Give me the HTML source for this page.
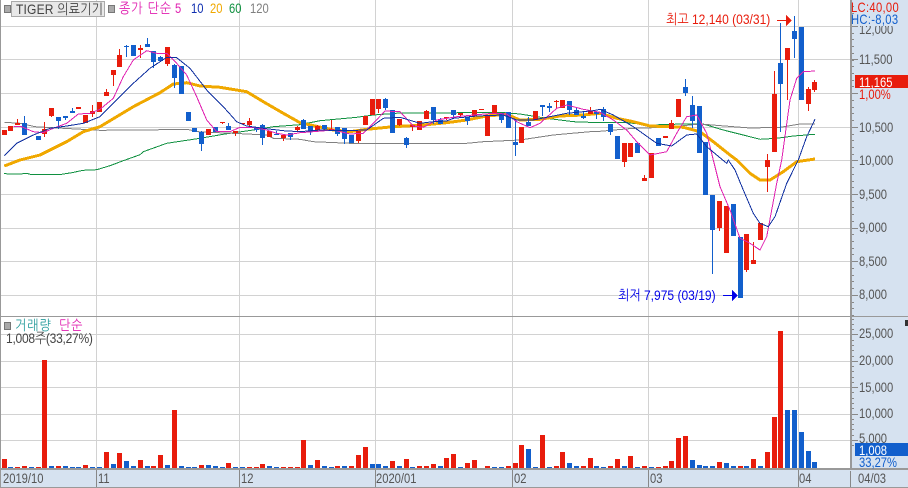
<!DOCTYPE html>
<html><head><meta charset="utf-8">
<style>
html,body{margin:0;padding:0;background:#fff}
#w{position:relative;width:908px;height:488px;overflow:hidden;background:#fff;font-family:"Liberation Sans","NanumGothic","Noto Sans CJK KR",sans-serif;font-size:14px}
svg{position:absolute;left:0;top:0}
.t{position:absolute;white-space:nowrap;line-height:14px;height:14px;color:#555;transform:scaleX(.8);transform-origin:0 50%}
.a{left:859px}
.k{transform:scaleX(.86)}
.s{position:absolute;width:5px;height:6px;background:#aaa;border:1px solid #777}
</style></head><body>
<div id="w">
<svg id="c" width="908" height="488" viewBox="0 0 908 488" shape-rendering="crispEdges"></svg>
<div class="s" style="left:4px;top:5px"></div>
<div style="position:absolute;left:11px;top:1px;width:92px;height:14px;background:#e8e8e8;border:1px solid #aaa"></div>
<div class="t k" style="left:16px;top:2px;color:#444;letter-spacing:.2px">TIGER 의료기기</div>
<div class="s" style="left:108px;top:5px"></div>
<div class="t k" style="left:119px;top:1px;color:#e020b0;letter-spacing:1px">종가 단순</div>
<div class="t" style="left:175px;top:1px;color:#e020b0">5</div>
<div class="t" style="left:191px;top:1px;color:#1030b0">10</div>
<div class="t" style="left:210px;top:1px;color:#f0a800">20</div>
<div class="t" style="left:229px;top:1px;color:#109040">60</div>
<div class="t" style="left:250px;top:1px;color:#808080">120</div>

<div class="t" style="left:851px;top:0;color:#e81c0c;letter-spacing:.4px">LC:40,00</div>
<div class="t" style="left:851px;top:12px;color:#125fcc;letter-spacing:.4px">HC:-8,03</div>

<div class="t a" style="top:22px;clip-path:inset(4px 0 0 0)">12,000</div>
<div class="t a" style="top:52px">11,500</div>
<div class="t a" style="top:120px">10,500</div>
<div class="t a" style="top:153px">10,000</div>
<div class="t a" style="top:187px">9,500</div>
<div class="t a" style="top:220px">9,000</div>
<div class="t a" style="top:254px">8,500</div>
<div class="t a" style="top:287px">8,000</div>
<div class="t a" style="top:87px;color:#e81c0c">1,00%</div>
<div style="position:absolute;left:855px;top:75px;width:53px;height:13px;background:#e81c0c"></div>
<div class="t a" style="top:75px;color:#fff">11,165</div>

<div class="t k" style="left:666px;top:12px;color:#e81c0c">최고 12,140 (03/31)</div>
<div class="t k" style="left:618px;top:288px;color:#0000e8">최저 7,975 (03/19)</div>

<div class="s" style="left:4px;top:322px"></div>
<div class="t k" style="left:15px;top:318px;color:#2a9d9d;letter-spacing:1px">거래량</div>
<div class="t k" style="left:59px;top:318px;color:#e020b0;letter-spacing:1px">단순</div>
<div class="t k" style="left:6px;top:331px;color:#444;letter-spacing:-.3px">1,008주(33,27%)</div>

<div class="t a" style="top:326px">25,000</div>
<div class="t a" style="top:353px">20,000</div>
<div class="t a" style="top:380px">15,000</div>
<div class="t a" style="top:406px">10,000</div>
<div class="t a" style="top:431px">5,000</div>
<div style="position:absolute;left:855px;top:443px;width:53px;height:13px;background:#125fcc"></div>
<div class="t a" style="top:443px;color:#fff">1,008</div>
<div class="t a" style="top:455px;color:#125fcc">33,27%</div>
<div style="position:absolute;left:905px;top:320px;width:3px;height:6px;background:#333"></div>

<div class="t" style="left:3px;top:471px">2019/10</div>
<div class="t" style="left:98px;top:471px">11</div>
<div class="t" style="left:241px;top:471px">12</div>
<div class="t" style="left:376px;top:471px">2020/01</div>
<div class="t" style="left:514px;top:471px">02</div>
<div class="t" style="left:650px;top:471px">03</div>
<div class="t" style="left:799px;top:471px">04</div>
<div class="t" style="left:858px;top:471px">04/03</div>
</div>
<script>
(function(){
var R='#e81c0c',B='#125fcc',out=[];
function rect(x,y,w,h,f){out.push('<rect x="'+x+'" y="'+y+'" width="'+w+'" height="'+h+'" fill="'+f+'"/>');}
// panels
rect(851,0,57,488,'#d6e2f0');
rect(0,469,908,19,'#d6e2f0');
// grid
[26,59,93,127,160,194,228,261,295,334,361,387,414,440].forEach(function(y){rect(1,y,849,1,'#d2d2d2');});
[96,239,375,512,648,798].forEach(function(x){rect(x,0,1,469,'#d2d2d2');});
// ticks
for(var k=0;k<47;k++){var y=Math.round(26+(k-3)*6.72);if(y>=0&&y<316){rect(851,y,3,1,'#888');}}
[26,59,93,127,160,194,228,261,295].forEach(function(y){rect(851,y,7,1,'#888');});
for(var k=0;k<29;k++){var y=Math.round(440+5.28-k*5.28*1);if(y>317&&y<468){rect(851,y,3,1,'#888');}}
[334,361,387,414,440].forEach(function(y){rect(851,y,7,1,'#888');});
// frame
rect(0,0,1,488,'#999');
rect(850,0,2,469,'#999');
rect(0,316,908,1,'#999');
rect(0,468,908,2,'#999');
rect(0,487,908,1,'#999');
[96,239,375,512,648,798].forEach(function(x){rect(x,470,1,17,'#888');});
rect(850,471,1,16,'#888');
// MAs
function seq(a){var s=[];a.forEach(function(g){var ox=g[0],oy=g[1],p=g[2];for(var i=0;i<p.length;i+=2){s.push((ox+p[i]/3).toFixed(1)+','+(oy+p[i+1]/3).toFixed(1));}});return s.join(' ');}
function pl(a,c,w){out.push('<polyline fill="none" stroke="'+c+'" stroke-width="'+w+'" points="'+seq(a)+'"/>');}
pl([[0,150,[12,70,24,72,60,72,80,70,90,73,185,73,215,68,250,61,290,59,330,47,370,32,420,14]],[0,0,[430,455,500,430,600,415,670,403,760,390,820,380,900,374]],[300,80,[60,122,170,112,220,105,300,99,400,99,600,97,660,102,740,115,820,125,900,128]],[600,0,[70,367,150,375,250,372,310,372,370,390,430,405,480,418,530,415,580,408,645,403]]],'#109040',1);
pl([[0,0,[13,367,60,370,105,380,190,385,300,391,430,390,560,388,600,396,700,400,800,405,820,415,900,418]],[300,80,[40,185,150,190,500,190,550,185,660,180,760,165,870,155,900,154]],[600,0,[100,385,200,382,300,372,400,380,450,384,540,382,600,372,645,372]]],'#808080',1);
var orange=[[0,0,[13,498,60,480,120,465,200,425,250,395,300,380,400,320,480,278,520,252,560,248,600,258,660,262,740,275,790,305,850,340,900,368]],[300,80,[100,150,150,155,200,148,280,140,370,135,440,128,500,120,560,108,620,103,660,120,720,118,780,108,850,105,900,100]],[600,0,[50,355,100,365,150,378,250,382,300,395,340,425,390,465]],[600,160,[410,0,450,40,480,60,510,60,550,35,590,5,645,-3]]];
pl(orange,'#f0a800',3);
// candles
var C=[[R,390,390,404,404],[R,379,379,392,392],[R,358,370,374,376],[B,348,370,404,405],null,[B,408,408,420,420],[R,366,388,402,411],[R,324,324,348,350],[B,351,351,362,388],[B,348,348,354,360],[B,324,333,338,338],[R,321,321,326,326],[R,345,345,368,368],[R,315,333,341,351],[R,306,306,336,336],[R,267,276,288,288],[R,210,210,225,258],[R,147,165,200,200],[B,135,137,141,171],[B,135,135,168,168],[R,135,144,150,174],[B,114,132,141,141],[B,153,153,186,204],[B,168,171,183,183],[R,141,141,192,198],[B,192,195,234,264],[B,198,198,282,282],[B,336,336,363,363],[B,384,384,396,396],[B,393,396,432,453],[R,387,387,405,405],[B,381,381,396,396],[R,366,366,369,372],[B,369,378,390,390],[R,393,393,399,408],[R,369,369,372,372],[R,354,363,375,384],[B,381,381,390,396],[B,372,375,414,435],[R,393,393,411,411],[B,393,402,405,405],[R,404,404,414,423],[B,399,399,411,420],[R,378,381,390,393]];
var D=[[B,117,120,147,147],[B,138,138,157,165],[R,135,138,150,153],[B,135,135,147,150],[R,120,147,150,153],[B,141,141,162,168],[B,144,144,177,192],[B,165,165,190,190],[R,153,153,183,190],[R,108,108,135,135],[R,57,57,105,105],[R,57,57,87,99],[B,54,57,84,90],[B,90,90,159,159],[R,117,117,135,138],[B,171,174,195,204],[R,135,135,141,153],[R,123,123,150,150],[R,90,93,117,117],[B,81,81,120,132],[B,114,120,132,132],[R,111,111,115,120],[B,90,90,105,111],[R,99,99,104,108],[B,111,111,123,135],[R,90,90,108,111],[R,87,87,90,90],[R,105,105,168,168],[R,75,75,99,99],[B,99,99,120,129],[B,96,96,144,144],[B,117,186,195,228],[R,141,141,189,189],[B,111,126,138,138],[R,93,93,120,120],[B,75,75,81,108],[B,69,78,84,96],[R,60,63,67,84],[R,60,60,84,84],[B,63,63,90,105],[B,81,90,105,105],[B,96,108,114,117],[R,81,93,102,102],[B,96,96,102,117]];
var E=[[B,321,327,351,363],[B,372,372,396,405],[B,408,408,477,477],[R,429,429,486,501],[R,429,429,471,471],[B,429,429,459,459],[R,525,534,543,543],[R,459,459,534,534],[B,414,414,438,438],[R,408,408,414,414],[R,361,369,387,387],[R,297,297,351,351],[B,237,261,279,288],[B,288,315,363,384],[B,318,318,459,459],[B,426,426,585,585],[B,585,585,690,822],[R,603,603,684,693],[R,618,618,759,759],[B,612,612,708,708],[B,711,711,894,894],[R,702,702,810,816],[R,726,780,792,792],[R,669,669,720,720],[R,462,480,501,576],[R,213,282,456,456],[B,69,189,252,396],[R,144,144,180,300],[B,48,93,117,174],[B,81,81,300,300],[R,261,267,312,333],[R,240,246,270,276]];
function draw(d,oy,start){for(var n=0;n<d.length;n++){var c=d[n];if(!c)continue;var i=start+n,col=Math.floor(4+i*6.815);
var f=function(v){return Math.round(oy+v/3);};var wt=f(c[1]),bt=f(c[2]),bb=f(c[3]),wb=f(c[4]);
rect(col,wt,1,Math.max(wb-wt,1),c[0]);rect(col-2,bt,5,Math.max(bb-bt,1),c[0]);}}
draw(C,0,0);draw(D,80,44);draw(E,0,88);
// remaining MAs on top
pl([[0,0,[40,380,65,380,100,395,130,398,160,385,200,370,235,342,270,340,300,328,340,295,370,230,400,180,440,152,470,160,500,160,530,190,560,225,590,290,620,360,650,395,690,395,720,382,760,382,800,390,830,400,860,405,900,398]],[300,80,[40,155,100,150,150,162,190,160,220,130,255,93,300,95,340,138,370,142,410,120,470,110,520,105,580,100,620,102,650,125,690,143,720,130,770,85,800,75,850,88,900,97]],[600,0,[40,360,80,390,110,425,150,465,200,455,230,400,260,350,290,345,320,400]],[600,160,[340,0,360,80,390,150,420,235,450,250,480,270,500,230,530,70,545,0]],[600,0,[570,300,590,235,610,215,645,213]]],'#e020b0',1);
pl([[0,0,[13,467,50,430,100,405,150,385,200,378,250,370,300,350,350,300,400,250,450,205,500,172,530,173,570,205,620,270,670,320,710,365,740,378,790,385,850,392,900,395]],[300,80,[60,150,130,152,200,150,250,115,300,112,360,130,400,125,440,123,460,115,530,108,610,105,650,120,700,120,740,112,800,100,880,92,900,88]],[600,0,[40,345,100,380,170,430,215,438,260,405,290,402,320,440,380,490]],[600,160,[385,0,405,30,430,90,460,160,480,190,505,200,525,170,560,70,595,0]],[600,0,[620,410,645,358]]],'#1030a0',1);
// volume
var V=[[R,447],[B,471],[R,471],[R,468],[B,471],[R,471],[R,150],[B,468],[R,468],[B,468],[B,471],[B,471],[R,465],[B,471],[B,471],[R,426],[B,462],[R,429],[B,453],[B,468],[R,450],[B,468],[R,468],[R,435],[B,465],[R,300],[B,468],[B,471],[B,471],[R,465],[B,465],[B,468],[B,471],[R,459],[B,471],[B,471],[R,471],[R,471],[R,462],[B,468],[B,471],[R,471],[R,471],[R,471]];
var W=[[R,120],[B,195],[R,180],[B,198],[B,201],[R,198],[B,198],[R,198],[R,165],[R,141],[B,192],[B,192],[B,198],[R,183],[B,198],[R,177],[B,201],[R,198],[R,198],[R,192],[B,198],[R,174],[R,162],[B,201],[R,189],[R,180],null,[R,198],[B,201],[B,201],[R,198],[R,189],[R,135],[B,147],[B,201],[R,105],[B,201],[R,198],[R,156],[B,189],[B,198],[R,198],[R,174],[B,198]];
var X=[[B,441],[R,438],[R,417],[B,438],[R,408],[B,441],[R,438],[B,441],[R,441],[R,438],[R,423],[R,354],[R,348],[B,420],[B,435],[B,438],[B,438],[R,426],[B,429],[B,438],[R,438],[B,438],[R,417],[B,438],[R,396],[R,291],[R,33],[B,270],[B,270],[B,336],[B,393],[B,426]];
function vol(d,oy,start){for(var n=0;n<d.length;n++){var c=d[n];if(!c)continue;var i=start+n,col=Math.floor(4+i*6.815),t=Math.round(oy+c[1]/3);rect(col-2,t,5,468-t,c[0]);}}
vol(V,310,0);vol(W,400,44);vol(X,320,88);
// arrows
rect(777,20,10,1,R);
out.push('<polygon points="786,15 792,20.5 786,26" fill="'+R+'"/>');
rect(723,295,10,1,'#0000e8');
out.push('<polygon points="732,290 738,295.5 732,301" fill="#0000e8"/>');
document.getElementById('c').innerHTML=out.join('');
})();
</script>
</body></html>
